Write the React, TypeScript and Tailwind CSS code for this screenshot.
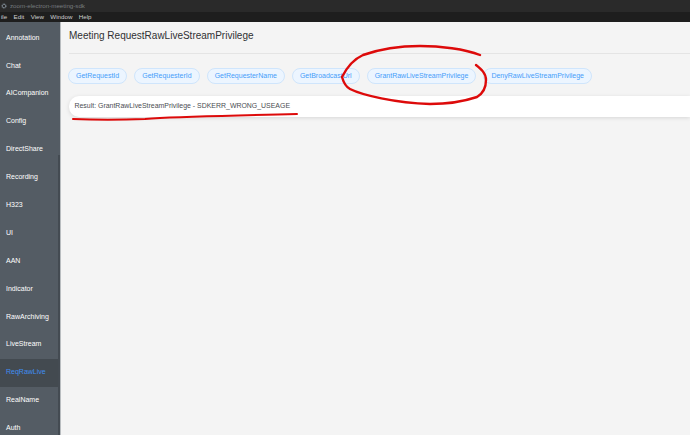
const menuItems = ["ile", "Edit", "View", "Window", "Help"];

const navItems = [
  "Annotation",
  "Chat",
  "AICompanion",
  "Config",
  "DirectShare",
  "Recording",
  "H323",
  "UI",
  "AAN",
  "Indicator",
  "RawArchiving",
  "LiveStream",
  "ReqRawLive",
  "RealName",
  "Auth",
];

const actions = [
  "GetRequestId",
  "GetRequesterId",
  "GetRequesterName",
  "GetBroadcastUrl",
  "GrantRawLiveStreamPrivilege",
  "DenyRawLiveStreamPrivilege",
];

export default function App() {
  return (
    <div className="relative flex h-[435px] w-[690px] flex-col overflow-hidden bg-[#f4f4f4] font-['Liberation_Sans',sans-serif]">
      <div className="flex h-3 items-center gap-[3px] bg-[#2a2a2a] pl-px">
        <svg width="6" height="6" viewBox="0 0 8 8">
          <circle cx="4" cy="4" r="2.5" fill="none" stroke="#8d9aa6" strokeWidth="1.6" strokeDasharray="1.2 0.6" />
        </svg>
        <span className="text-[6.2px] leading-none text-[#777b7f]">zoom-electron-meeting-sdk</span>
      </div>
      <div className="flex h-[10px] items-center gap-[6.4px] bg-[#1e1e1e] pl-px">
        {menuItems.map((item) => (
          <span key={item} className="text-[6.2px] leading-none text-[#d0d0d0]">
            {item}
          </span>
        ))}
      </div>
      <div className="flex min-h-0 flex-1">
        <aside className="relative w-[61px] shrink-0 border-r border-[#b9bdc0] bg-[#545c64]">
          <nav className="pt-[2px]">
            {navItems.map((item) => (
              <div
                key={item}
                className={`flex h-[27.9px] items-center pl-[6px] text-[7px] ${
                  item === "ReqRawLive" ? "bg-[#434a50] text-[#3f8ef0]" : "text-white"
                }`}
              >
                {item}
              </div>
            ))}
          </nav>
          <div className="absolute top-[133px] right-0 bottom-0 w-[2px] bg-[#444b52]" />
        </aside>
        <main className="min-w-0 flex-1 pt-[7px] pl-[8px]">
          <h1 className="text-[10px] leading-[14px] text-[#303133]">Meeting RequestRawLiveStreamPrivilege</h1>
          <div className="mt-[10px] h-px bg-[#e4e4e4]" />
          <div className="mt-[14px] -ml-px flex gap-[7px]">
            {actions.map((action) => (
              <button
                key={action}
                className="flex h-4 items-center justify-center rounded-full border border-[#cfe5fc] bg-[#ecf5ff] px-[7px] text-[7px] text-[#469dfa]"
              >
                {action}
              </button>
            ))}
          </div>
          <div className="mt-3 flex h-[21px] items-center rounded-l-[10px] bg-white pl-[5.5px] text-[6.95px] text-[#4a4d52] shadow-[0_1px_4px_rgba(0,0,0,0.12)]">
            Result: GrantRawLiveStreamPrivilege - SDKERR_WRONG_USEAGE
          </div>
        </main>
      </div>
      {/* red marker scribbles on top of the screenshot */}
      <svg className="absolute top-0 left-0" width="690" height="435" viewBox="0 0 690 435" fill="none">
        <path
          d="M480 55C465 49 440 46 420 46C400 46 380 49 363 55C352 60 346 69 342 77C344 84 346 87 350 89C362 95 395 103 430 104C450 104 468 100 477 97C482 94 486 88 486 80C486 73 481 69 476 65"
          stroke="#dd0a0a"
          strokeWidth="2.4"
          strokeLinecap="round"
        />
        <path
          d="M73 119C95 120 120 120 145 119C180 116 225 116 297 114"
          stroke="#dd0a0a"
          strokeWidth="2"
          strokeLinecap="round"
        />
      </svg>
    </div>
  );
}
